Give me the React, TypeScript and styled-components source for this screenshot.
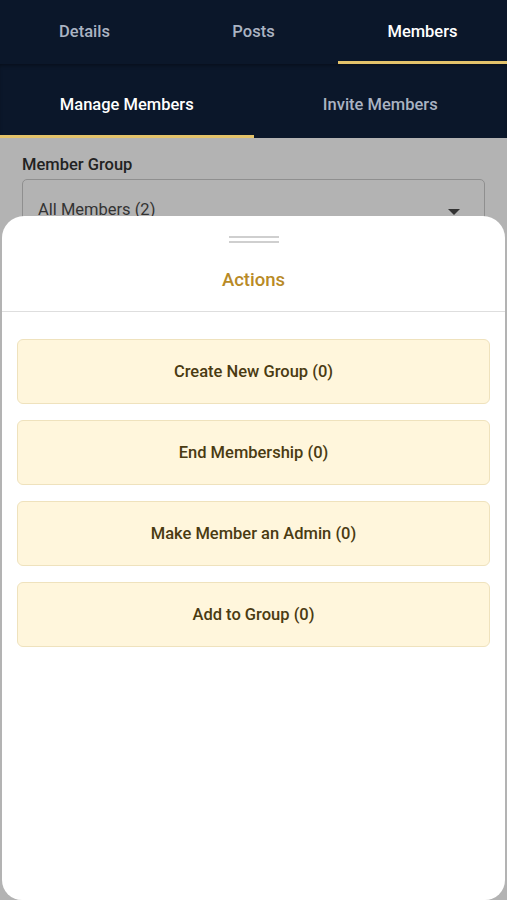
import React from 'react'
import styled, { createGlobalStyle } from 'styled-components'

const GlobalStyle = createGlobalStyle`
    html, body {
        margin: 0;
        padding: 0;
        background: #b3b3b3;
        font-family: Roboto, "Noto Sans", Arial, sans-serif;
    }
    * { box-sizing: border-box; }
`

const topTabs = ['Details', 'Posts', 'Members']
const subTabs = ['Manage Members', 'Invite Members']
const actions = [
    'Create New Group (0)',
    'End Membership (0)',
    'Make Member an Admin (0)',
    'Add to Group (0)',
]

export default function App() {
    return (
        <Screen>
            <GlobalStyle />
            <Header>
                <TabRow height={64} offset={2}>
                    {topTabs.map((t) => (
                        <Tab key={t} isActive={t === 'Members'}>{t}</Tab>
                    ))}
                </TabRow>
                <TabRow height={74} offset={10}>
                    {subTabs.map((t) => (
                        <Tab key={t} isActive={t === 'Manage Members'}>{t}</Tab>
                    ))}
                </TabRow>
            </Header>
            <Body>
                <Label>Member Group</Label>
                <Select>
                    <span>All Members (2)</span>
                    <Caret />
                </Select>
            </Body>
            <Sheet>
                <Handle><i /><i /></Handle>
                <SheetTitle>Actions</SheetTitle>
                <ActionList>
                    {actions.map((a) => (
                        <ActionButton key={a}>{a}</ActionButton>
                    ))}
                </ActionList>
            </Sheet>
        </Screen>
    )
}

const Screen = styled.div`
    width: 507px;
    height: 900px;
    overflow: hidden;
    position: relative;
    background: #b3b3b3;
`

const Header = styled.div`
    background: #0b172a;
`

const TabRow = styled.div<{ height: number; offset: number }>`
    display: flex;
    height: ${({ height }) => height}px;
    padding-top: ${({ offset }) => offset}px;
    & + & {
        box-shadow: inset 0 3px 4px -2px rgba(0, 0, 0, 0.45);
    }
`

const Tab = styled.div<{ isActive?: boolean }>`
    flex: 1;
    display: flex;
    align-items: center;
    justify-content: center;
    font-size: 16.5px;
    font-weight: 500;
    color: ${({ isActive }) => (isActive ? '#ffffff' : '#aab3c2')};
    border-bottom: 3px solid ${({ isActive }) => (isActive ? '#e3c26a' : 'transparent')};
`

const Body = styled.div`
    padding: 17px 22px 0;
`

const Label = styled.div`
    font-size: 16.5px;
    font-weight: 500;
    color: #222222;
    margin-bottom: 5px;
`

const Select = styled.div`
    height: 56px;
    width: 463px;
    border: 1px solid #8f8f8f;
    border-radius: 5px;
    display: flex;
    justify-content: space-between;
    padding: 20px 24px 0 15px;
    font-size: 16.5px;
    color: #333333;
`

const Caret = styled.div`
    width: 0;
    height: 0;
    margin-top: 9px;
    border-left: 6px solid transparent;
    border-right: 6px solid transparent;
    border-top: 6px solid #333333;
`

const Sheet = styled.div`
    position: absolute;
    left: 2px;
    right: 2px;
    top: 216px;
    bottom: 0;
    background: #ffffff;
    border-radius: 22px 22px 20px 20px;
`

const Handle = styled.div`
    display: flex;
    flex-direction: column;
    align-items: center;
    gap: 3px;
    padding-top: 20px;
    i {
        display: block;
        width: 50px;
        height: 2px;
        background: #cfcfcf;
    }
`

const SheetTitle = styled.div`
    text-align: center;
    font-size: 18.5px;
    font-weight: 500;
    color: #b88a26;
    padding: 26px 0 20px;
    border-bottom: 1px solid #dedede;
`

const ActionList = styled.div`
    display: flex;
    flex-direction: column;
    gap: 16px;
    padding: 27px 15px 0;
`

const ActionButton = styled.div`
    height: 65px;
    display: flex;
    align-items: center;
    justify-content: center;
    background: #fff6dc;
    border: 1px solid #efe2bd;
    border-radius: 6px;
    font-size: 16.5px;
    font-weight: 500;
    color: #4a3b12;
`
